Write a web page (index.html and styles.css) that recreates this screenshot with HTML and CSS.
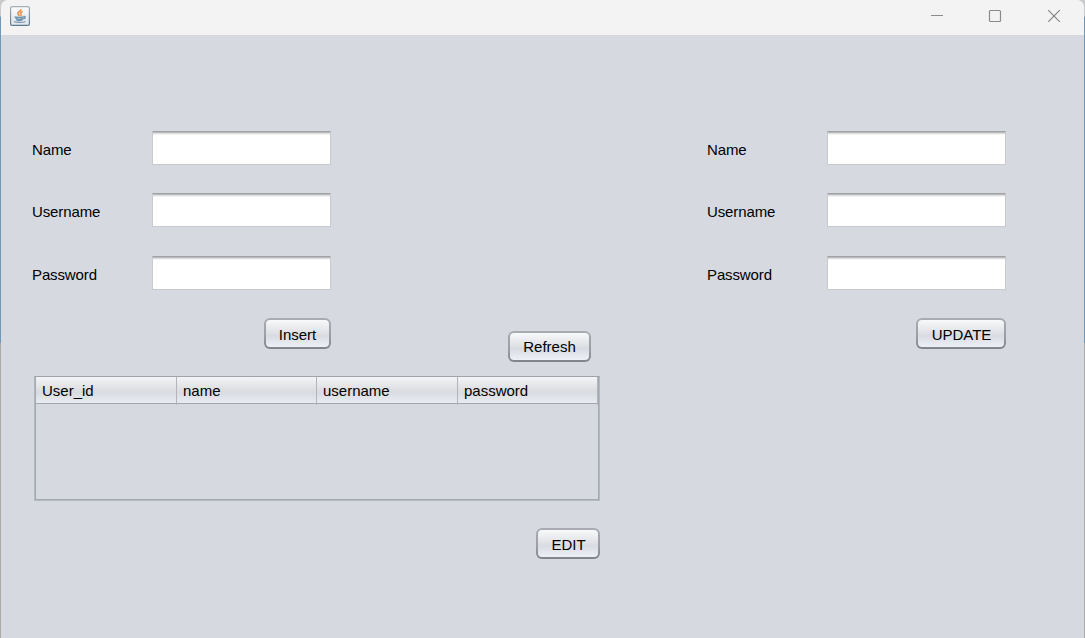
FILE: index.html
```html
<!DOCTYPE html>
<html lang="en">
<head>
<meta charset="utf-8">
<title>Users</title>
<link rel="stylesheet" href="styles.css">
</head>
<body>
<div class="window">
  <header class="titlebar">
    <svg class="app-icon" width="20" height="20" viewBox="0 0 20 20">
      <defs><linearGradient id="tile" x2="0" y2="1"><stop stop-color="#fcfcfc"/><stop offset="1" stop-color="#dfe4e9"/></linearGradient>
      <linearGradient id="edge" x2="0" y2="1"><stop stop-color="#a5adb4"/><stop offset="1" stop-color="#5c7b91"/></linearGradient></defs>
      <rect x=".6" y=".6" width="18.8" height="18.8" rx="1.5" fill="url(#tile)" stroke="url(#edge)" stroke-width="1.2"/>
      <path d="M11 3c.5 2-4.200 3-3 5 .3.700 1 1.200 1.500 2M12.800 5.500c-2.400.8-2.900 1.700-1.800 2.700.5.600.2 1.100-.4 1.700" fill="none" stroke="#e9944f" stroke-width="1.700"/>
      <path d="M4.500 10.800c2 .7 7.500.7 9.300 0M5.400 12.400c1.800.9 5.800.8 7.600.1M6.300 13.900c1.800.7 4.500.7 6 0M13.600 10.500c2.300-.4 2 2-.5 2.600" fill="none" stroke="#7093ae" stroke-width="1.400"/>
      <path d="M4 15.500c2 1.200 9 1.200 11.500-.1" fill="none" stroke="#7f9cb2" stroke-width="1.100"/>
    </svg>
    <div class="controls">
      <svg width="14" height="14" viewBox="0 0 14 14"><path d="M1 7.500h12" stroke="#8b8b8b"/></svg>
      <svg width="14" height="14" viewBox="0 0 14 14"><rect x="1.500" y="2.500" width="11" height="11" rx="1" fill="none" stroke="#8b8b8b" stroke-width="1.200"/></svg>
      <svg width="14" height="14" viewBox="0 0 14 14"><path d="M1.200 2.200l11.600 11.600M12.800 2.200L1.200 13.800" stroke="#858585" stroke-width="1.200"/></svg>
    </div>
  </header>
  <main class="content">
    <section class="users">
      <form class="form">
        <label class="row"><span class="label">Name</span><input class="field" type="text"></label>
        <label class="row"><span class="label">Username</span><input class="field" type="text"></label>
        <label class="row"><span class="label">Password</span><input class="field" type="text"></label>
      </form>
      <div class="actions">
        <button class="button insert">Insert</button>
        <button class="button refresh">Refresh</button>
      </div>
      <div class="table">
        <div class="table-head">
          <span class="cell">User_id</span><span class="cell">name</span><span class="cell">username</span><span class="cell">password</span>
        </div>
      </div>
      <button class="button edit">EDIT</button>
    </section>
    <section class="editor">
      <form class="form">
        <label class="row"><span class="label">Name</span><input class="field" type="text"></label>
        <label class="row"><span class="label">Username</span><input class="field" type="text"></label>
        <label class="row"><span class="label">Password</span><input class="field" type="text"></label>
      </form>
      <button class="button update">UPDATE</button>
    </section>
  </main>
</div>
</body>
</html>
```
FILE: styles.css
```css
* { box-sizing: border-box; }
body {
  margin: 0;
  height: 638px;
  overflow: hidden;
  padding: 0 1px;
  background: linear-gradient(#c9cacb 0 16px, #6f97b8 17px 343px, #aaa9a7 343px);
  font: 15px "Liberation Sans", Arial, sans-serif;
  color: #000;
}
.window {
  height: 638px;
  background: #d6d9e0;
  border-radius: 7px 7px 0 0;
  overflow: hidden;
}
.titlebar {
  display: flex;
  align-items: flex-start;
  justify-content: space-between;
  height: 35px;
  padding: 6px 23px 0 9px;
  background: #f3f3f3;
}
.app-icon { display: block; }
.controls { display: flex; gap: 45px; padding-top: 2px; }
.controls svg { display: block; }
.controls svg:first-child { margin-right: -1px; }
.content { display: flex; padding: 96px 0 0 31px; }
.users { width: 675px; }
.editor { width: 299px; display: flex; flex-direction: column; align-items: flex-end; }
.form { display: block; height: 187px; }
.row { display: flex; align-items: flex-start; height: 62.4px; }
.label { width: 120px; padding-top: 10px; line-height: 18px; letter-spacing: -0.12px; }
.field {
  width: 179px;
  height: 34px;
  padding: 4px 8px;
  font: inherit;
  outline: 0;
  border: 1px solid #c8cacd;
  border-top: 1px solid #a0a2a6;
  background: linear-gradient(#b9babd 0 1px, #dddee0 1px 2px, #f5f5f5 2px 3px, #fff 3px);
}
.button {
  display: block;
  height: 31px;
  padding: 2px 0 0;
  border: 2px solid transparent;
  border-radius: 6px;
  background:
    linear-gradient(#f8f9fa, #dfe1e5 48%, #d8dbe1 58%, #edf0f6) padding-box,
    linear-gradient(#a9acb2, #9b9ea4 60%, #808388) border-box;
  font: inherit;
  color: #000;
}
.actions { display: flex; align-items: flex-start; }
.insert { width: 67px; margin-left: 232px; }
.refresh { width: 83px; margin: 13px 0 0 177px; padding-top: 0; }
.table {
  width: 566px;
  height: 125px;
  margin: 14px 0 0 2px;
  border: 1px solid #b4b8c0;
  border-top-color: #a0a3a9;
  box-shadow: inset -1px 0 #a4a8b0, inset 1px 0 #a4a8b0, inset 0 -1px #a4a8b0;
  padding: 0 1px;
}
.table-head {
  display: grid;
  grid-template-columns: 141px 140px 141px 1fr;
  height: 27px;
  border-bottom: 1px solid #a4a6ab;
  background: linear-gradient(#f3f4f5, #dddfe2 48%, #d9dce0 60%, #e8ebf2);
}
.cell { padding-left: 6px; line-height: 28px; border-right: 1px solid #b2b5ba; }
.edit { width: 64px; margin: 27px 0 0 504px; padding-left: 1px; }
.update { width: 90px; padding-left: 1px; }
```
